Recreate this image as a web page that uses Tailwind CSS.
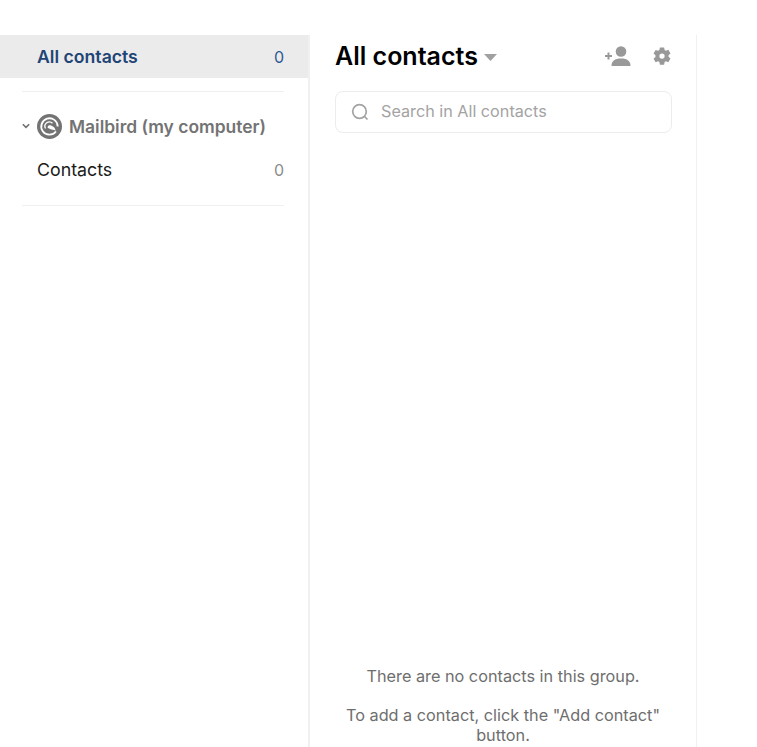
<html lang="en">
<head>
    <meta charset="utf-8"/>
    <title>Contacts</title>
    <script src="https://cdn.jsdelivr.net/npm/@tailwindcss/browser@4"></script>
</head>
<body class="bg-white overflow-hidden font-['Inter',sans-serif]">
    <div class="flex h-[747px] w-[757px] pt-[35px]">
        <!-- groups -->
        <div class="w-[310px] shrink-0 border-r-2 border-[#f0f0f0]">
            <div class="flex items-center justify-between h-[43px] pl-[37px] pr-[24px] bg-[#ebebeb]">
                <span class="mt-[2px] text-[17.650px] font-semibold text-[#1f4476]">All contacts</span>
                <span class="text-[16px] text-[#2f5a94]">0</span>
            </div>
            <div class="ml-[22px] mr-[24px] mt-[13px] border-t border-[#f0f0f0]"></div>
            <div class="flex items-center h-[26px] mt-[21px] pl-[22px]">
                <svg class="w-[8px] h-[6px] mr-[7px]" viewBox="0 0 8 6" fill="none" stroke="#6f6f6f" stroke-width="1.5"><path d="M0.8 1.2 4 4.4 7.2 1.2"/></svg>
                <svg class="w-[25px] h-[25px] mr-[7px]" viewBox="0 0 25 25" fill="none">
                    <circle cx="12.5" cy="12.5" r="12.5" fill="#737373"/>
                    <path d="M19 17.500a8.200 8.200 0 1 1 1.700-5" stroke="#fff" stroke-width="1.800"/>
                    <path d="M8.500 14.500a4.400 4.400 0 0 1 7-5.200" stroke="#fff" stroke-width="1.300"/>
                    <path d="M10.500 13.500a2.600 2.600 0 0 1 4.500-1.500c2 .7 3.300 2.400 3.700 4.800-2.300-1.600-5.500-.8-8.200-3.300z" fill="#fff"/>
                </svg>
                <span class="mt-[2px] text-[17.450px] font-semibold text-[#737373]">Mailbird (my computer)</span>
            </div>
            <div class="flex items-center justify-between h-[43px] mt-[9px] pl-[37px] pr-[24px]">
                <span class="mt-[2px] text-[17.800px] text-[#1a1a1a]">Contacts</span>
                <span class="text-[16px] text-[#8c8c8c]">0</span>
            </div>
            <div class="ml-[22px] mr-[24px] mt-[14px] border-t border-[#f0f0f0]"></div>
        </div>
        <!-- list -->
        <div class="w-[387px] shrink-0 border-r border-[#f0f0f0] flex flex-col">
            <div class="flex items-center h-[43px] pl-[25px] pr-[24px]">
                <span class="text-[25px] font-semibold text-black">All contacts</span>
                <svg class="w-[13px] h-[7px] ml-[6px] mt-[1px]" viewBox="0 0 13 7"><path d="M0 0h13L6.500 7z" fill="#a0a0a0"/></svg>
                <svg class="w-[27px] h-[20px] ml-auto -mt-[1px]" viewBox="0 0 27 20" fill="#999999">
                    <circle cx="17" cy="5.500" r="5.300"/>
                    <path d="M7.500 20c0-5 3-7.500 9.500-7.500S26.500 15 26.500 20z"/>
                    <path d="M1 9h2.500V6.500h2V9H8v2H5.500v2.500h-2V11H1z"/>
                </svg>
                <svg class="w-[18px] h-[18px] ml-[22px] mr-[1px] -mt-[2px]" viewBox="0 0 24 24" fill="#999999">
                    <path fill-rule="evenodd" d="M9.200.5h5.600l.7 3.400 1.700 1 3.300-1.100 2.800 4.800-2.600 2.300v2.200l2.600 2.300-2.800 4.800-3.300-1.100-1.700 1-.7 3.400H9.200l-.7-3.400-1.700-1-3.300 1.100L.7 15.600l2.600-2.300v-2.200L.7 8.800l2.800-4.800 3.300 1.100 1.700-1zM12 8.500a3.500 3.500 0 1 0 0 7 3.500 3.500 0 0 0 0-7z"/>
                </svg>
            </div>
            <div class="flex items-center h-[42px] ml-[25px] mr-[24px] mt-[13px] pl-[15px] border border-[#ececec] rounded-lg">
                <svg class="w-[18px] h-[18px]" viewBox="0 0 18 18" fill="none" stroke="#a3a3a3" stroke-width="1.700"><circle cx="8.500" cy="8.500" r="6.800"/><path d="M13.500 13.500 16.500 16.500"/></svg>
                <span class="ml-[12px] -mt-[1px] text-[16.200px] text-[#a3a3a3]">Search in All contacts</span>
            </div>
            <div class="mt-auto px-[25px] pb-[2px] text-center text-[16.250px] leading-[20px] text-[#6e6e6e]">
                <p>There are no contacts in this group.</p>
                <p class="mt-[19px]">To add a contact, click the "Add contact" button.</p>
            </div>
        </div>
    </div>
</body>
</html>
